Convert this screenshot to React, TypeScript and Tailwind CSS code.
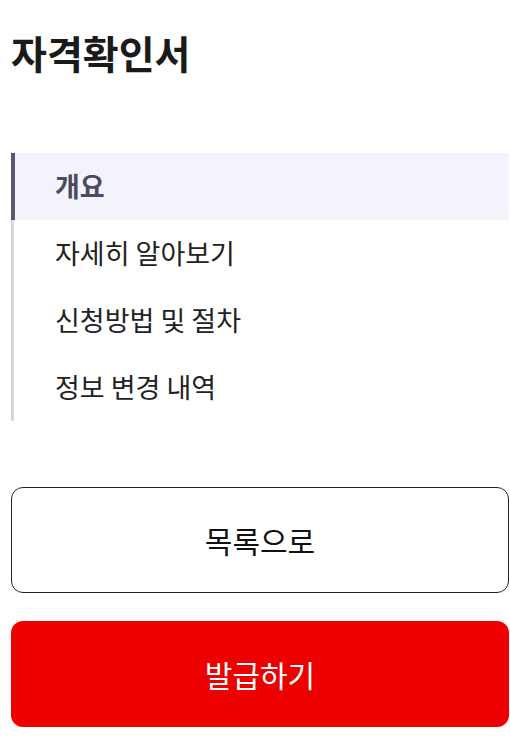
export default function App() {
  const items = ["개요", "자세히 알아보기", "신청방법 및 절차", "정보 변경 내역"];

  return (
    <div
      className="bg-white min-h-[740px] pl-[11px] pr-[1px] text-[#1a1a1a]"
      style={{ fontFamily: '"Noto Sans CJK KR", "Noto Sans", sans-serif' }}
    >
      <h1 className="pt-[22px] text-[39px] font-bold leading-[60px]">자격확인서</h1>

      <nav className="mt-[71px] border-l-[3px] border-[#d4d6dc]">
        {items.map((item, i) => (
          <div
            key={item}
            className={
              i === 0
                ? "-ml-[3px] h-[67px] flex items-center pl-[40px] bg-[#f3f4fb] border-l-[4px] border-[#58596e] text-[#4a4b63] font-bold text-[27px]"
                : "h-[67px] flex items-center pl-[41px] text-[27px] text-[#222]"
            }
          >
            {item}
          </div>
        ))}
      </nav>

      <div className="mt-[66px] flex flex-col gap-[28px]">
        <button className="h-[106px] w-full rounded-[12px] border border-[#222] bg-white text-[30px] text-[#111]">
          목록으로
        </button>
        <button className="h-[106px] w-full rounded-[12px] bg-[#ec0000] text-[30px] text-white">
          발급하기
        </button>
      </div>
    </div>
  );
}
